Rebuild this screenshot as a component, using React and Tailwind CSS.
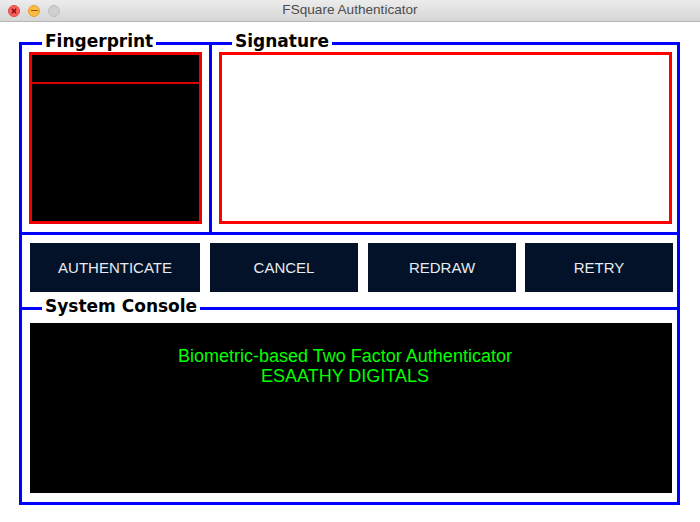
import React from "react";

function Legend({ children, className }) {
  return (
    <span
      className={
        "absolute bg-white px-[3px] text-[17px] leading-[20px] font-bold text-black font-['DejaVu_Sans',sans-serif] " +
        className
      }
    >
      {children}
    </span>
  );
}

function Btn({ children, className }) {
  return (
    <div
      className={
        "h-[49px] pt-[2px] bg-[#031229] flex items-center justify-center text-[15px] text-[#e8ebf0] font-['Liberation_Sans',Arial,sans-serif] " +
        className
      }
    >
      {children}
    </div>
  );
}

export default function App() {
  return (
    <div className="w-[700px] h-[522px] bg-white overflow-hidden relative">
      {/* title bar */}
      <div className="h-[22px] bg-gradient-to-b from-[#ececec] to-[#d6d6d6] border-b border-[#b5b5b5] flex items-center relative">
        <div className="flex items-center gap-[8px] pl-[8px]">
          <div className="w-[12px] h-[12px] rounded-full bg-[#fc605c] border border-[#de4a45] flex items-center justify-center">
            <svg width="6" height="6" viewBox="0 0 6 6">
              <path d="M0.8 0.8 L5.2 5.2 M5.2 0.8 L0.8 5.2" stroke="#7e0508" strokeWidth="1.3" />
            </svg>
          </div>
          <div className="w-[12px] h-[12px] rounded-full bg-[#fdbc40] border border-[#de9f34] flex items-center justify-center">
            <div className="w-[7px] h-[1.5px] bg-[#995700]" />
          </div>
          <div className="w-[12px] h-[12px] rounded-full bg-[#d0d0d0] border border-[#bdbdbd]" />
        </div>
        <div className="absolute inset-0 flex items-center justify-center text-[13.6px] text-[#4d4d4d] font-['Liberation_Sans',Arial,sans-serif]">
          FSquare Authenticator
        </div>
      </div>

      {/* main frame */}
      <div className="ml-[19px] mt-[20px] w-[661px] h-[463px] border-[3px] border-[#0000ff] flex flex-col">
        {/* top row */}
        <div className="h-[187px] flex">
          <div className="w-[187px] relative pt-[7px] pl-[7px]">
            <Legend className="left-[20px] top-[-14px]">Fingerprint</Legend>
            <div className="w-[173px] h-[172px] border-[3px] border-[#ee0000] bg-black flex flex-col">
              <div className="h-[29px] border-b-[2px] border-[#dd0000]" />
            </div>
          </div>
          <div className="w-[3px] bg-[#0000ff]" />
          <div className="flex-1 relative pt-[7px] pl-[7px]">
            <Legend className="left-[20px] top-[-14px]">Signature</Legend>
            <div className="w-[453px] h-[172px] border-[3px] border-[#ff0000] bg-white" />
          </div>
        </div>
        <div className="h-[3px] bg-[#0000ff]" />
        {/* buttons */}
        <div className="h-[72px] pt-[8px] pl-[8px] flex">
          <Btn className="w-[170px]">AUTHENTICATE</Btn>
          <Btn className="w-[148px] ml-[10px]">CANCEL</Btn>
          <Btn className="w-[148px] ml-[10px]">REDRAW</Btn>
          <Btn className="w-[148px] ml-[9px]">RETRY</Btn>
        </div>
        <div className="h-[3px] bg-[#0000ff]" />
        {/* console */}
        <div className="flex-1 relative pt-[13px] pl-[8px]">
          <Legend className="left-[20px] top-[-14px]">System Console</Legend>
          <div className="w-[642px] h-[170px] bg-black pt-[23px] pr-[12px] flex flex-col items-center text-[18px] leading-[20px] text-[#00ff00] font-['Liberation_Sans',Arial,sans-serif]">
            <div>Biometric-based Two Factor Authenticator</div>
            <div>ESAATHY DIGITALS</div>
          </div>
        </div>
      </div>
    </div>
  );
}
